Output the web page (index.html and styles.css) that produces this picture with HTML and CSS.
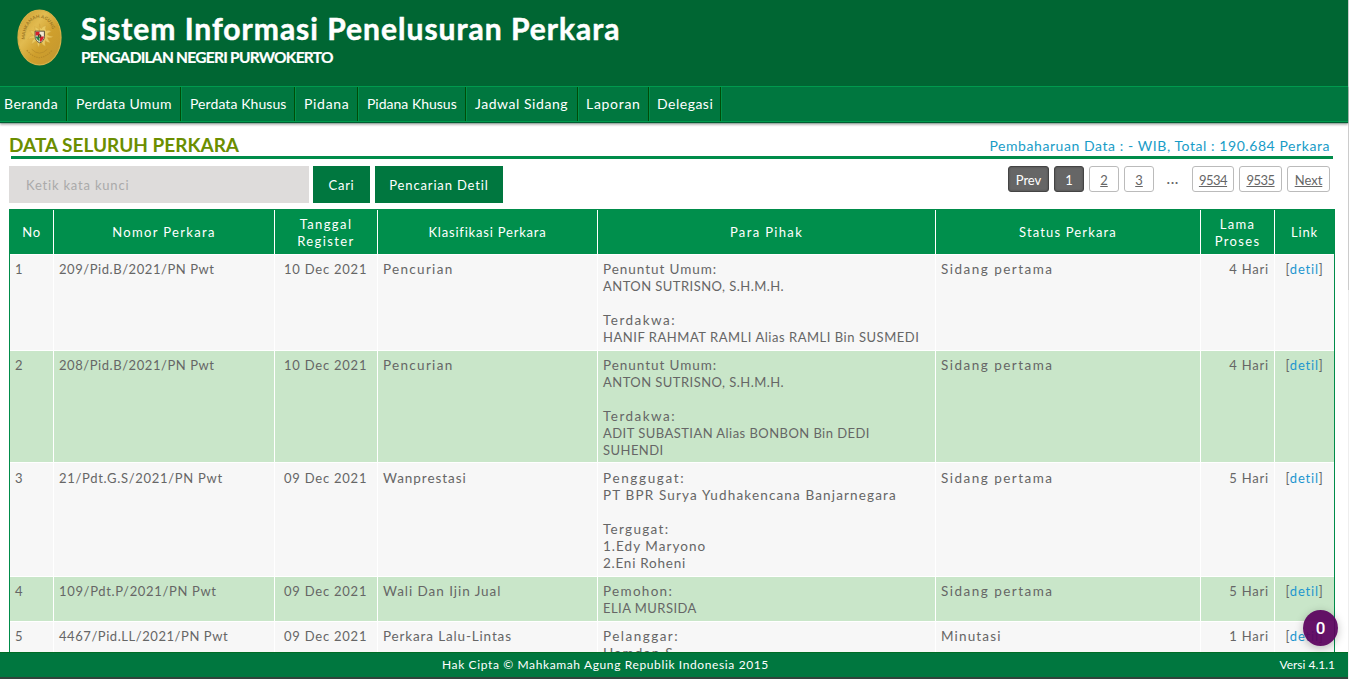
FILE: index.html
```html
<!DOCTYPE html>
<html lang="id">
<head>
<meta charset="utf-8">
<title>Sistem Informasi Penelusuran Perkara</title>
<link rel="stylesheet" href="styles.css">
</head>
<body>
<div class="page">
<header class="header">
<svg class="logo" viewBox="0 0 46 58">
<defs><linearGradient id="gold" x1="0" y1="0" x2="1" y2="1"><stop offset="0" stop-color="#c99a2b"/><stop offset=".35" stop-color="#e2bb50"/><stop offset=".6" stop-color="#cf9f2c"/><stop offset="1" stop-color="#c29631"/></linearGradient>
<path id="arc" d="M8 31 A15 22 0 0 1 38 31"/></defs>
<ellipse cx="23" cy="29" rx="22" ry="28" fill="url(#gold)" stroke="#d8b147" stroke-width="1.2"/>
<text class="motto"><textPath href="#arc">MAHKAMAH AGUNG</textPath></text>
<path d="M23 15 q0 4 2 5 q1-3 5-3 q-2 3 0 5 q2-1 5 1 q-4 1-4 3 q2 2 6 2 q-3 2-6 1 q1 3 3 5 q-4 0-5-2 q-1 3 0 6 q-4-2-4-5 q-2 2-3 6 q-2-4-1-7 q-3 1-6 4 q0-5 3-6 q-3-1-7 1 q2-4 6-4 q-2-2-4-5 q4-1 6 2 q0-3-1-6 q4 1 5 4 q1-3 0-7z" fill="#e9c961" stroke="#cda03a" stroke-width=".4"/>
<path d="M10 42 Q23 57 36 42" fill="none" stroke="#b98c28" stroke-width="1.3" stroke-dasharray="1.4 1"/><path d="M15 41 Q23 49 31 41" fill="none" stroke="#b98c28" stroke-width=".8"/>
<path d="M18.5 22.5h9.500v5.500q0 4.500-4.750 6.500-4.750-2-4.750-6.500z" fill="#f3e9d0" stroke="#4a4436" stroke-width=".9"/>
<path d="M19 23h4v4h-4zM23.500 28h4q-.5 4-4 5.500z" fill="#d5202b"/><path d="M19 28h4v5q-3.500-2-4-5z" fill="#26844b"/><circle cx="23.200" cy="27.500" r="1.700" fill="#292a2a"/><circle cx="23.200" cy="27.500" r=".7" fill="#f0c53c"/>
</svg>
<div class="brand"><h1>Sistem Informasi Penelusuran Perkara</h1><h2>PENGADILAN NEGERI PURWOKERTO</h2></div>
</header>
<nav class="nav"><a class="n1">Beranda</a><a class="n2">Perdata Umum</a><a class="n3">Perdata Khusus</a><a class="n4">Pidana</a><a class="n5">Pidana Khusus</a><a class="n6">Jadwal Sidang</a><a class="n7">Laporan</a><a class="n8">Delegasi</a></nav>
<main class="main">
<div class="heading"><h3>DATA SELURUH PERKARA</h3><span class="total">Pembaharuan Data : - WIB, Total : 190.684 Perkara</span></div>
<div class="tools">
<div class="search">Ketik kata kunci</div><div class="btn cari">Cari</div><div class="btn detail">Pencarian Detil</div>
<div class="pager"><span class="pg on prev">Prev</span><span class="pg on">1</span><a class="pg">2</a><a class="pg">3</a><span class="dots">...</span><a class="pg wide">9534</a><a class="pg wide last">9535</a><a class="pg next">Next</a></div>
</div>
<div class="table">
<div class="row head"><div>No</div><div class="ls13">Nomor Perkara</div><div class="ls16">Tanggal<br>Register</div><div>Klasifikasi Perkara</div><div class="ls13">Para Pihak</div><div class="ls11">Status Perkara</div><div class="ls13">Lama<br>Proses</div><div>Link</div></div>
<div class="row r1"><div>1</div><div>209/Pid.B/2021/PN Pwt</div><div>10 Dec 2021</div><div class="ls13">Pencurian</div><div><p class="ls9">Penuntut Umum:</p><p class="caps">ANTON SUTRISNO, S.H.M.H.</p><p class="next-party ls14">Terdakwa:</p><p class="caps wider">HANIF RAHMAT RAMLI Alias RAMLI Bin SUSMEDI</p></div><div class="ls14">Sidang pertama</div><div>4 Hari</div><div>[<a>detil</a>]</div></div>
<div class="row r2 alt"><div>2</div><div>208/Pid.B/2021/PN Pwt</div><div>10 Dec 2021</div><div class="ls13">Pencurian</div><div><p class="ls9">Penuntut Umum:</p><p class="caps">ANTON SUTRISNO, S.H.M.H.</p><p class="next-party ls14">Terdakwa:</p><p class="caps">ADIT SUBASTIAN Alias BONBON Bin DEDI<br>SUHENDI</p></div><div class="ls14">Sidang pertama</div><div>4 Hari</div><div>[<a>detil</a>]</div></div>
<div class="row r3"><div>3</div><div>21/Pdt.G.S/2021/PN Pwt</div><div>09 Dec 2021</div><div class="ls9">Wanprestasi</div><div><p class="ls16">Penggugat:</p><p class="ls11">PT BPR Surya Yudhakencana Banjarnegara</p><p class="next-party ls13">Tergugat:</p><p class="ls10">1.Edy Maryono</p><p class="ls7">2.Eni Roheni</p></div><div class="ls14">Sidang pertama</div><div>5 Hari</div><div>[<a>detil</a>]</div></div>
<div class="row r4 alt"><div>4</div><div>109/Pdt.P/2021/PN Pwt</div><div>09 Dec 2021</div><div class="ls9">Wali Dan Ijin Jual</div><div><p class="ls13">Pemohon:</p><p class="caps">ELIA MURSIDA</p></div><div class="ls14">Sidang pertama</div><div>5 Hari</div><div>[<a>detil</a>]</div></div>
<div class="row r5"><div>5</div><div>4467/Pid.LL/2021/PN Pwt</div><div>09 Dec 2021</div><div class="ls8">Perkara Lalu-Lintas</div><div><p class="ls14">Pelanggar:</p><p class="ls13">Hamdan S</p></div><div class="ls11">Minutasi</div><div>1 Hari</div><div>[<a>detil</a>]</div></div>
</div>
</main>
<footer class="footer"><span class="copy">Hak Cipta © Mahkamah Agung Republik Indonesia 2015</span><span class="ver">Versi 4.1.1</span></footer>
<div class="count">0</div>
</div>
</body>
</html>
```

FILE: styles.css
```css
*{box-sizing:border-box}
body{margin:0;background:#fff;font:13px/17px Lato,"Liberation Sans",sans-serif;color:#666;overflow:hidden}
.page{position:relative;width:1349px;height:679px;padding-right:1px;display:flex;flex-direction:column;overflow:hidden}
.page::after{content:"";position:absolute;right:0;top:0;width:1px;height:679px;background:linear-gradient(#ccc 290px,#eee 290px)}
h1,h2,h3,p{margin:0}
.header{flex:none;height:86px;background:#063;color:#fff;display:flex;padding:9px 0 0 17px}
.logo{width:45px;height:57px;flex:none}
.motto{font:bold 4.6px Lato,sans-serif;fill:#9c7724;letter-spacing:.1px}
.brand{margin-left:19px;padding-top:1px;white-space:nowrap}
h1{font-size:30px;line-height:36px;letter-spacing:.78px;-webkit-text-stroke:.5px #fff;letter-spacing:1px}
h2{font-size:15.5px;line-height:22px;letter-spacing:-.74px;-webkit-text-stroke:.2px #fff}
.nav{flex:none;height:36px;background:#00773f;border-top:1px solid #009a4e;border-bottom:1px solid #009a4e;display:flex;box-shadow:0 1px 1px #005c31,0 3px 2px #bbb;z-index:1}
.nav a{height:34px;line-height:33px;font-size:14px;color:#fff;border-right:1px solid #004d08;box-shadow:1px 0 #00904a;white-space:nowrap;padding-left:9px}
.nav .n1{width:67px;padding-left:4px;letter-spacing:.45px}
.nav .n2{width:114px;letter-spacing:.36px}
.nav .n3{width:114px;letter-spacing:.08px}
.nav .n4{width:63px;letter-spacing:.7px}
.nav .n5{width:108px}
.nav .n6{width:112px;letter-spacing:.55px}
.nav .n7{width:71px;padding-left:8px;letter-spacing:.7px}
.nav .n8{width:72px;padding-left:8px;letter-spacing:.5px}
.main{height:530px;flex:none;padding:12px 13px 0 9px;overflow:hidden}
.heading{height:25px;margin-left:2px;border-bottom:3px solid #008c4a;display:flex;justify-content:space-between;width:1322px}
h3{font-size:19px;line-height:21px;color:#6b8e00;margin-left:-2px}
.total{font-size:14px;line-height:24px;color:#189cc7;letter-spacing:.57px;padding-right:3px}
.tools{display:flex;height:50px;padding-top:7px;width:1321px}
.search{width:300px;height:37px;background:#dedcdb;color:#aaa;line-height:39px;padding-left:17px;letter-spacing:.8px}
.btn{height:37px;line-height:39px;background:#00773f;color:#fff;text-align:center;letter-spacing:.7px}
.cari{width:57px;margin-left:4px}
.detail{width:128px;margin-left:5px;letter-spacing:.85px}
.pager{display:flex;margin-left:auto}
.pg{width:30px;height:26px;border:1px solid #bbb;border-radius:3px;margin-right:5px;text-align:center;line-height:26px;text-decoration:underline}
.pg.on{background:#666;border-color:#444;color:#fff;text-decoration:none;box-shadow:inset 0 0 2px #444}
.pg.prev{width:41px}
.pg.wide{width:42px;letter-spacing:-.5px}
.pg.last{width:43px}
.pg.next{width:43px;margin-right:0}
.dots{width:28px;text-align:center;line-height:26px;letter-spacing:1px;margin-right:5px;font-weight:bold}
.table{width:1326px;border:1px solid #008c4a;letter-spacing:.8px}
.row{display:grid;grid-template-columns:43px 221px 103px 220px 338px 265px 74px 60px;background:#f7f7f7;border-bottom:1px solid #fff}
.row>div{padding:6px 0 0 5px;border-left:1px solid #fff;white-space:nowrap}
.row>div:first-child{border-left:0}
.row>div:nth-child(2){letter-spacing:.56px}
.row>div:nth-child(3){letter-spacing:.77px;padding-left:9px}
.row>div:nth-child(n+4):nth-child(-n+6){font-size:13.5px}
.row>div:nth-child(7){text-align:right;padding-right:5px}
.row>div:nth-child(8){text-align:center;padding-left:0}
.row.r3>div{padding-top:7px}
.row.r3>div:nth-child(2){letter-spacing:.7px}
.row.r4>div:nth-child(2){letter-spacing:.66px}
.row.alt{background:#c9e6c9}
.row a{color:#1d96cf}
.row.head{height:45px;background:#008f4c;color:#fff}
.row.head>div:nth-child(n){display:flex;align-items:center;justify-content:center;text-align:center;padding:1px 0 0;font-size:13px}
.row .ls7{letter-spacing:.75px}
.row .ls8{letter-spacing:.85px}
.row .ls9{letter-spacing:.95px}
.row .ls10{letter-spacing:1.03px}
.row .ls11{letter-spacing:1.15px}
.row .ls13{letter-spacing:1.3px}
.row.head .ls13:nth-child(n){letter-spacing:1.35px}
.row .ls14{letter-spacing:1.48px}
.row .ls16{letter-spacing:1.65px}
.row.head .ls16:nth-child(n){letter-spacing:1.4px}
.row .caps{font-size:13px;letter-spacing:.45px}
.row .wider{letter-spacing:.53px}
.next-party{margin-top:17px}
.r1{height:96px}
.r2{height:112px}
.r3{height:114px}
.r4{height:45px}
.r5{height:60px}
.footer{flex:none;height:25px;margin-bottom:2px;background:#00773f;border-top:1px solid #006c25;color:#fff;display:flex;justify-content:space-between;line-height:24px;font-size:12px;padding:0 13px 0 442px;z-index:1;box-shadow:0 2px #30443b}
.copy{letter-spacing:.62px}
.count{position:absolute;left:1303px;top:610px;width:35px;height:36px;border-radius:50%;background:rgba(91,3,95,.94);color:#fff;text-align:center;font:500 17px/36px Roboto,sans-serif;box-shadow:0 2px 8px rgba(0,0,0,.25);z-index:2}
```
